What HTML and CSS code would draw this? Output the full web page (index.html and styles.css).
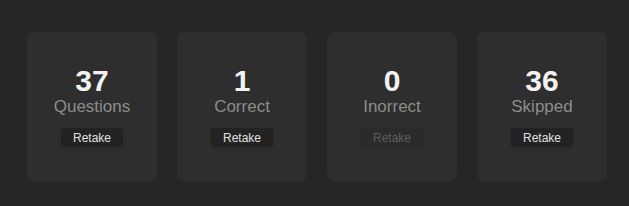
FILE: index.html
```html
<!DOCTYPE html>
<html lang="en">
<head>
<meta charset="utf-8">
<title>Results</title>
<link rel="stylesheet" href="styles.css">
</head>
<body>
<section class="result-board">
  <div class="stat-card">
    <strong class="num">37</strong>
    <span class="label">Questions</span>
    <button type="button" class="btn-retake">Retake</button>
  </div>
  <div class="stat-card">
    <strong class="num">1</strong>
    <span class="label">Correct</span>
    <button type="button" class="btn-retake">Retake</button>
  </div>
  <div class="stat-card">
    <strong class="num">0</strong>
    <span class="label">Inorrect</span>
    <button type="button" class="btn-retake" disabled>Retake</button>
  </div>
  <div class="stat-card">
    <strong class="num">36</strong>
    <span class="label">Skipped</span>
    <button type="button" class="btn-retake">Retake</button>
  </div>
</section>
</body>
</html>
```

FILE: styles.css
```css
*{margin:0;padding:0;box-sizing:border-box}
body{background-color:#262626;font-family:"Liberation Sans",Arial,sans-serif}
.result-board{display:flex;gap:20px;padding:32px 0 0 27px}
.stat-card{display:flex;flex-direction:column;align-items:center;width:130px;height:150px;padding-top:34px;border-radius:8px;background-color:#2e2e2e}
.stat-card .num{font-size:30px;font-weight:bold;line-height:30px;color:#f2f2f2}
.stat-card .label{margin-top:0;font-size:17px;line-height:22px;color:#8c8c8c}
.btn-retake{margin-top:9px;width:64px;height:21px;border:1px solid #2a2a2a;border-radius:3px;background-color:#232323;font-family:inherit;font-size:12px;color:#e0e0e0;cursor:pointer}
.btn-retake:disabled{background-color:#2b2b2b;border-color:#2c2c2c;color:#5e5e5e;cursor:default}
```
